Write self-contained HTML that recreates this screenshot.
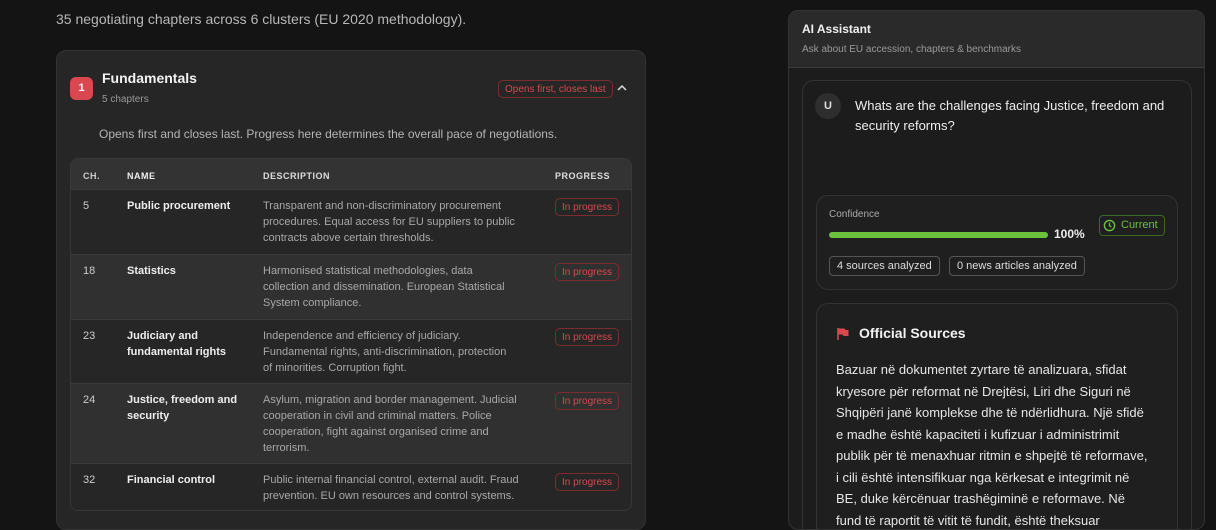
<!DOCTYPE html>
<html><head><meta charset="utf-8"><style>
*{box-sizing:border-box;margin:0;padding:0}
body{width:1216px;height:515px;overflow:hidden;background:#141414;font-family:"Liberation Sans",sans-serif;color:#e8e8e8;position:relative}
.abs{position:absolute}
.intro{left:56px;top:11px;font-size:14px;color:#b8b8b8}
.card{left:56px;top:50px;width:590px;height:480px;background:#262626;border:1px solid #333;border-radius:10px}
.badge1{left:70px;top:77px;width:23px;height:23px;background:#d9484e;border-radius:6px;color:#fff;font-size:11px;font-weight:bold;text-align:center;line-height:23px}
.tag{border:1px solid #7a2d2f;color:#d9484e;border-radius:5px;font-size:10px;padding:0 6px;height:18px;line-height:17px;white-space:nowrap}
.table{left:70px;top:158px;width:562px;height:353px;border:1px solid #383838;border-radius:8px;overflow:hidden}
.row{position:absolute;left:0;width:100%;font-size:11px;line-height:16px;border-top:1px solid #3a3a3a}
.row .c{position:absolute;left:12px;color:#ccc}
.row .n{position:absolute;left:56px;color:#eee;font-weight:bold;width:120px}
.row .d{position:absolute;left:192px;color:#a8a8a8;white-space:nowrap}
.row .p{position:absolute;left:484px}
.hd{font-size:9px;font-weight:bold;letter-spacing:.5px;color:#ddd}
.panel{left:788px;top:10px;width:417px;height:520px;background:#1c1c1c;border:1px solid #333;border-radius:10px;overflow:hidden}
.ph{left:0;top:0;width:100%;height:57px;background:#2a2a2a;border-bottom:1px solid #3a3a3a}
.ic{border:1px solid #333;border-radius:12px}
.pill{border:1px solid #555;border-radius:4px;font-size:11px;height:20px;line-height:18px;padding:0 7px;color:#ddd;white-space:nowrap}
</style></head><body>
<div class="abs intro">35 negotiating chapters across 6 clusters (EU 2020 methodology).</div>
<div class="abs card"></div>
<div class="abs badge1">1</div>
<div class="abs" style="left:102px;top:70px;font-size:14px;font-weight:bold;color:#f2f2f2">Fundamentals</div>
<div class="abs" style="left:102px;top:94px;font-size:10px;color:#999">5 chapters</div>
<div class="abs tag" style="left:498px;top:80px">Opens first, closes last</div>
<svg class="abs" style="left:616px;top:83px" width="12" height="10" viewBox="0 0 12 10"><path d="M2 7L6 3L10 7" stroke="#ddd" stroke-width="1.5" fill="none"/></svg>
<div class="abs" style="left:99px;top:127px;font-size:12px;color:#b5b5b5">Opens first and closes last. Progress here determines the overall pace of negotiations.</div>
<div class="abs table">
 <div class="row hd" style="top:0;height:30px;background:#333;border-top:none"><span class="c hd" style="top:9px">CH.</span><span class="n hd" style="top:9px">NAME</span><span class="d hd" style="top:9px;color:#ddd">DESCRIPTION</span><span class="p hd" style="top:9px">PROGRESS</span></div>
 <div class="row" style="top:30px;height:65px;background:#262626"><span class="c" style="top:8px">5</span><span class="n" style="top:8px">Public procurement</span><span class="d" style="top:8px">Transparent and non-discriminatory procurement<br>procedures. Equal access for EU suppliers to public<br>contracts above certain thresholds.</span><span class="p tag" style="top:8px">In progress</span></div>
 <div class="row" style="top:95px;height:65px;background:#303030"><span class="c" style="top:8px">18</span><span class="n" style="top:8px">Statistics</span><span class="d" style="top:8px">Harmonised statistical methodologies, data<br>collection and dissemination. European Statistical<br>System compliance.</span><span class="p tag" style="top:8px">In progress</span></div>
 <div class="row" style="top:160px;height:64px;background:#262626"><span class="c" style="top:8px">23</span><span class="n" style="top:8px">Judiciary and fundamental rights</span><span class="d" style="top:8px">Independence and efficiency of judiciary.<br>Fundamental rights, anti-discrimination, protection<br>of minorities. Corruption fight.</span><span class="p tag" style="top:8px">In progress</span></div>
 <div class="row" style="top:224px;height:80px;background:#303030"><span class="c" style="top:8px">24</span><span class="n" style="top:8px">Justice, freedom and security</span><span class="d" style="top:8px">Asylum, migration and border management. Judicial<br>cooperation in civil and criminal matters. Police<br>cooperation, fight against organised crime and<br>terrorism.</span><span class="p tag" style="top:8px">In progress</span></div>
 <div class="row" style="top:304px;height:50px;background:#262626"><span class="c" style="top:8px">32</span><span class="n" style="top:8px">Financial control</span><span class="d" style="top:8px">Public internal financial control, external audit. Fraud<br>prevention. EU own resources and control systems.</span><span class="p tag" style="top:9px">In progress</span></div>
</div>

<div class="abs panel">
 <div class="abs ph"></div>
 <div class="abs" style="left:13px;top:11px;font-size:12px;font-weight:bold;color:#f0f0f0">AI Assistant</div>
 <div class="abs" style="left:13px;top:33px;font-size:10px;color:#9a9a9a">Ask about EU accession, chapters &amp; benchmarks</div>
 <div class="abs ic" style="left:13px;top:69px;width:390px;height:460px;background:#1c1c1c"></div>
 <div class="abs" style="left:26px;top:82px;width:26px;height:26px;border-radius:50%;background:#2e2e2e;font-size:11px;font-weight:bold;text-align:center;line-height:26px;color:#ddd">U</div>
 <div class="abs" style="left:66px;top:85px;width:330px;font-size:13px;line-height:20px;color:#eee">Whats are the challenges facing Justice, freedom and security reforms?</div>
 <div class="abs ic" style="left:27px;top:184px;width:362px;height:95px;background:#1f1f1f"></div>
 <div class="abs" style="left:40px;top:198px;font-size:10px;color:#aaa">Confidence</div>
 <div class="abs" style="left:40px;top:221px;width:219px;height:6px;border-radius:3px;background:#6cc23c"></div>
 <div class="abs" style="left:265px;top:216px;font-size:12px;font-weight:bold;color:#eee">100%</div>
 <div class="abs" style="left:310px;top:204px;width:66px;height:21px;border:1px solid #3c6a26;border-radius:4px;color:#6cc23c;font-size:11px;line-height:19px;padding-left:21px">Current</div>
 <svg class="abs" style="left:314px;top:208px" width="13" height="13" viewBox="0 0 14 14"><circle cx="7" cy="7" r="5.5" stroke="#6cc23c" stroke-width="1.5" fill="none"/><path d="M7 4v3.2l2 1.3" stroke="#6cc23c" stroke-width="1.4" fill="none"/></svg>
 <div class="abs pill" style="left:40px;top:245px">4 sources analyzed</div>
 <div class="abs pill" style="left:160px;top:245px">0 news articles analyzed</div>
 <div class="abs ic" style="left:27px;top:292px;width:362px;height:240px;background:#1f1f1f"></div>
 <svg class="abs" style="left:47px;top:316px" width="14" height="14" viewBox="0 0 14 14"><path d="M2 1v12" stroke="#d9484e" stroke-width="1.6"/><path d="M2.5 1.5h6l1 1.5h3v6h-5l-1-1.5h-4z" fill="#d9484e"/></svg>
 <div class="abs" style="left:70px;top:314px;font-size:14px;font-weight:bold;color:#f2f2f2">Official Sources</div>
 <div class="abs" style="left:47px;top:348px;font-size:13px;line-height:21.5px;color:#e6e6e6;white-space:nowrap">Bazuar në dokumentet zyrtare të analizuara, sfidat<br>kryesore për reformat në Drejtësi, Liri dhe Siguri në<br>Shqipëri janë komplekse dhe të ndërlidhura. Një sfidë<br>e madhe është kapaciteti i kufizuar i administrimit<br>publik për të menaxhuar ritmin e shpejtë të reformave,<br>i cili është intensifikuar nga kërkesat e integrimit në<br>BE, duke kërcënuar trashëgiminë e reformave. Në<br>fund të raportit të vitit të fundit, është theksuar</div>
</div>
</body></html>
